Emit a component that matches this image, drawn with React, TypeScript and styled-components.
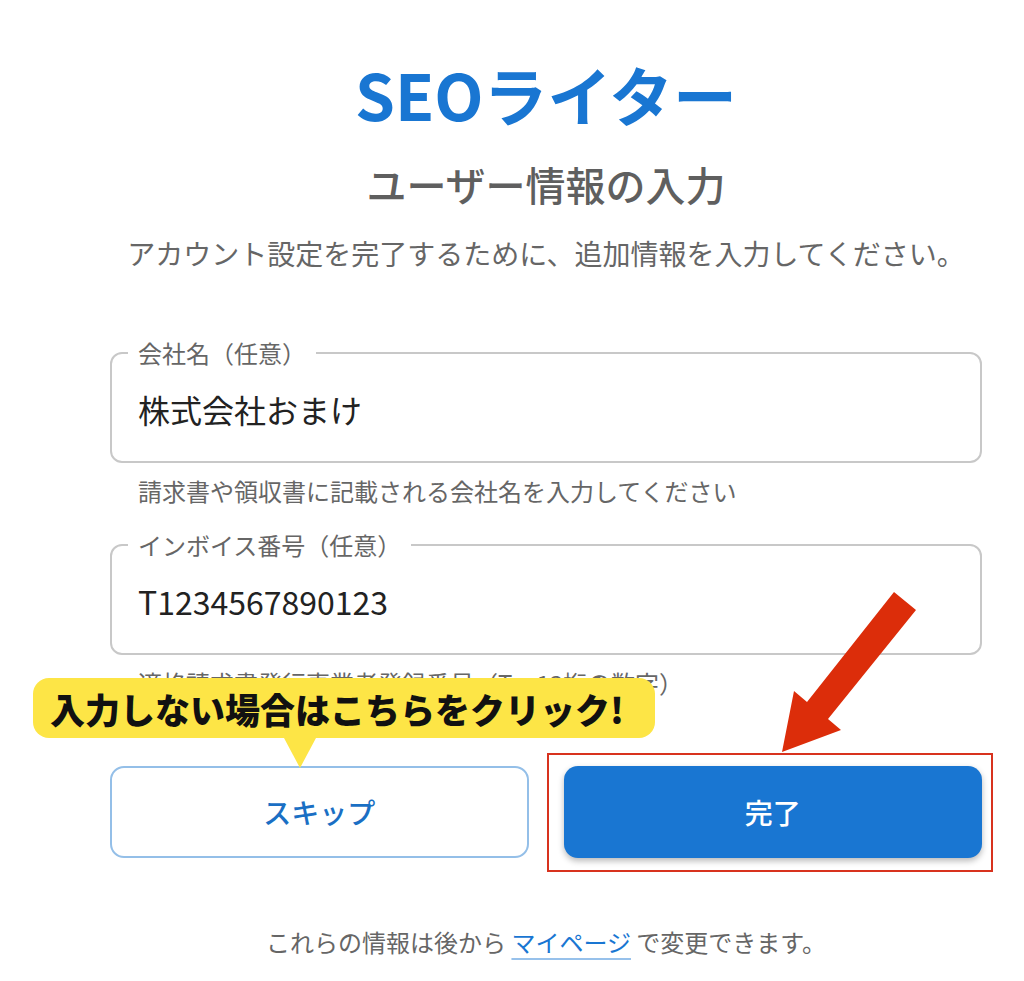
import React from "react";
import styled, { createGlobalStyle } from "styled-components";

const FONT = '"Noto Sans CJK JP", "Noto Sans", "Liberation Sans", sans-serif';

const Global = createGlobalStyle`
  html, body { margin: 0; padding: 0; background: #ffffff; }
  body { font-family: ${FONT}; color: #222; }
  * { box-sizing: border-box; }
`;

const Page = styled.div`
  position: relative;
  width: 1024px;
  min-height: 981px;
  padding: 53px 42px 0 110px;
  display: flex;
  flex-direction: column;
  font-family: ${FONT};
`;

const Logo = styled.h1`
  margin: 0;
  text-align: center;
  font-size: 64px;
  line-height: 80px;
  font-weight: 700;
  color: #1976d2;
`;

const Subtitle = styled.h2`
  margin: 27px 0 0;
  text-align: center;
  font-size: 40px;
  line-height: 48px;
  font-weight: 500;
  color: #5f5f5f;
`;

const Description = styled.p`
  margin: 25px 0 0;
  text-align: center;
  font-size: 28px;
  line-height: 40px;
  color: #666;
  white-space: nowrap;
`;

const Field = styled.fieldset<{ $gap: number }>`
  margin: ${(p) => p.$gap}px 0 0;
  padding: 0 26px;
  min-width: 0;
  border: 2px solid #c8c8c8;
  border-radius: 12px;
`;

const Legend = styled.legend`
  margin-left: -10px;
  padding: 0 10px;
  font-size: 24px;
  line-height: 24px;
  color: #666;
`;

const Input = styled.input`
  display: block;
  width: 100%;
  height: 88px;
  margin: 0 0 8px;
  padding: 0;
  border: none;
  outline: none;
  background: transparent;
  font-family: ${FONT};
  font-size: 32px;
  color: #222;
`;

const Helper = styled.p`
  margin: 8px 0 0;
  padding-left: 28px;
  font-size: 24px;
  line-height: 40px;
  color: #666;
  white-space: nowrap;
`;

const ButtonRow = styled.div`
  position: relative;
  margin-top: 63px;
  display: grid;
  grid-template-columns: 1fr 1fr;
  gap: 35px;
`;

const BaseButton = styled.button`
  height: 92px;
  border-radius: 14px;
  font-family: ${FONT};
  font-size: 28px;
  font-weight: 500;
  cursor: pointer;
`;

const SkipButton = styled(BaseButton)`
  background: #ffffff;
  border: 2px solid #94bfe8;
  color: #1a6fc4;
`;

const PrimaryWrap = styled.div`
  position: relative;
`;

const PrimaryButton = styled(BaseButton)`
  width: 100%;
  background: #1976d2;
  border: none;
  color: #ffffff;
  box-shadow: 0 3px 6px rgba(0, 0, 0, 0.28);
`;

const RedFrame = styled.div`
  position: absolute;
  left: -17px;
  right: -11px;
  top: -13px;
  bottom: -14px;
  border: 2px solid #d8321e;
  pointer-events: none;
`;

const Bubble = styled.div`
  position: absolute;
  left: -77px;
  top: -88px;
  width: 622px;
  height: 60px;
  padding-left: 17px;
  display: flex;
  align-items: center;
  background: #fde546;
  border-radius: 16px;
  font-size: 35px;
  font-weight: 900;
  color: #111;
  white-space: nowrap;
  z-index: 2;

  &::after {
    content: "";
    position: absolute;
    left: 251px;
    top: 60px;
    border-left: 16px solid transparent;
    border-right: 16px solid transparent;
    border-top: 30px solid #fde546;
  }
`;

const Footer = styled.p`
  margin: 64px 0 0;
  text-align: center;
  font-size: 24px;
  line-height: 40px;
  color: #666;
`;

const Link = styled.a`
  color: #1976d2;
  text-decoration: underline;
  text-decoration-color: rgba(25, 118, 210, 0.45);
  text-underline-offset: 6px;
  text-decoration-thickness: 2px;
`;

const ArrowLayer = styled.svg`
  position: absolute;
  left: 0;
  top: 0;
  pointer-events: none;
  z-index: 3;
`;

export default function App() {
  return (
    <>
      <Global />
      <Page>
        <Logo>SEOライター</Logo>
        <Subtitle>ユーザー情報の入力</Subtitle>
        <Description>アカウント設定を完了するために、追加情報を入力してください。</Description>

        <Field $gap={68}>
          <Legend>会社名（任意）</Legend>
          <Input defaultValue="株式会社おまけ" />
        </Field>
        <Helper>請求書や領収書に記載される会社名を入力してください</Helper>

        <Field $gap={22}>
          <Legend>インボイス番号（任意）</Legend>
          <Input defaultValue="T1234567890123" />
        </Field>
        <Helper>適格請求書発行事業者登録番号（T + 13桁の数字）</Helper>

        <ButtonRow>
          <Bubble>入力しない場合はこちらをクリック!</Bubble>
          <SkipButton>スキップ</SkipButton>
          <PrimaryWrap>
            <PrimaryButton>完了</PrimaryButton>
            <RedFrame />
          </PrimaryWrap>
        </ButtonRow>

        <Footer>
          これらの情報は後から <Link href="#">マイページ</Link> で変更できます。
        </Footer>

        <ArrowLayer width="1024" height="981" viewBox="0 0 1024 981">
          <polygon
            points="894,592 807,702 794,691 782,752 841,730 828,719 916,610"
            fill="#dc2d0a"
          />
        </ArrowLayer>
      </Page>
    </>
  );
}
